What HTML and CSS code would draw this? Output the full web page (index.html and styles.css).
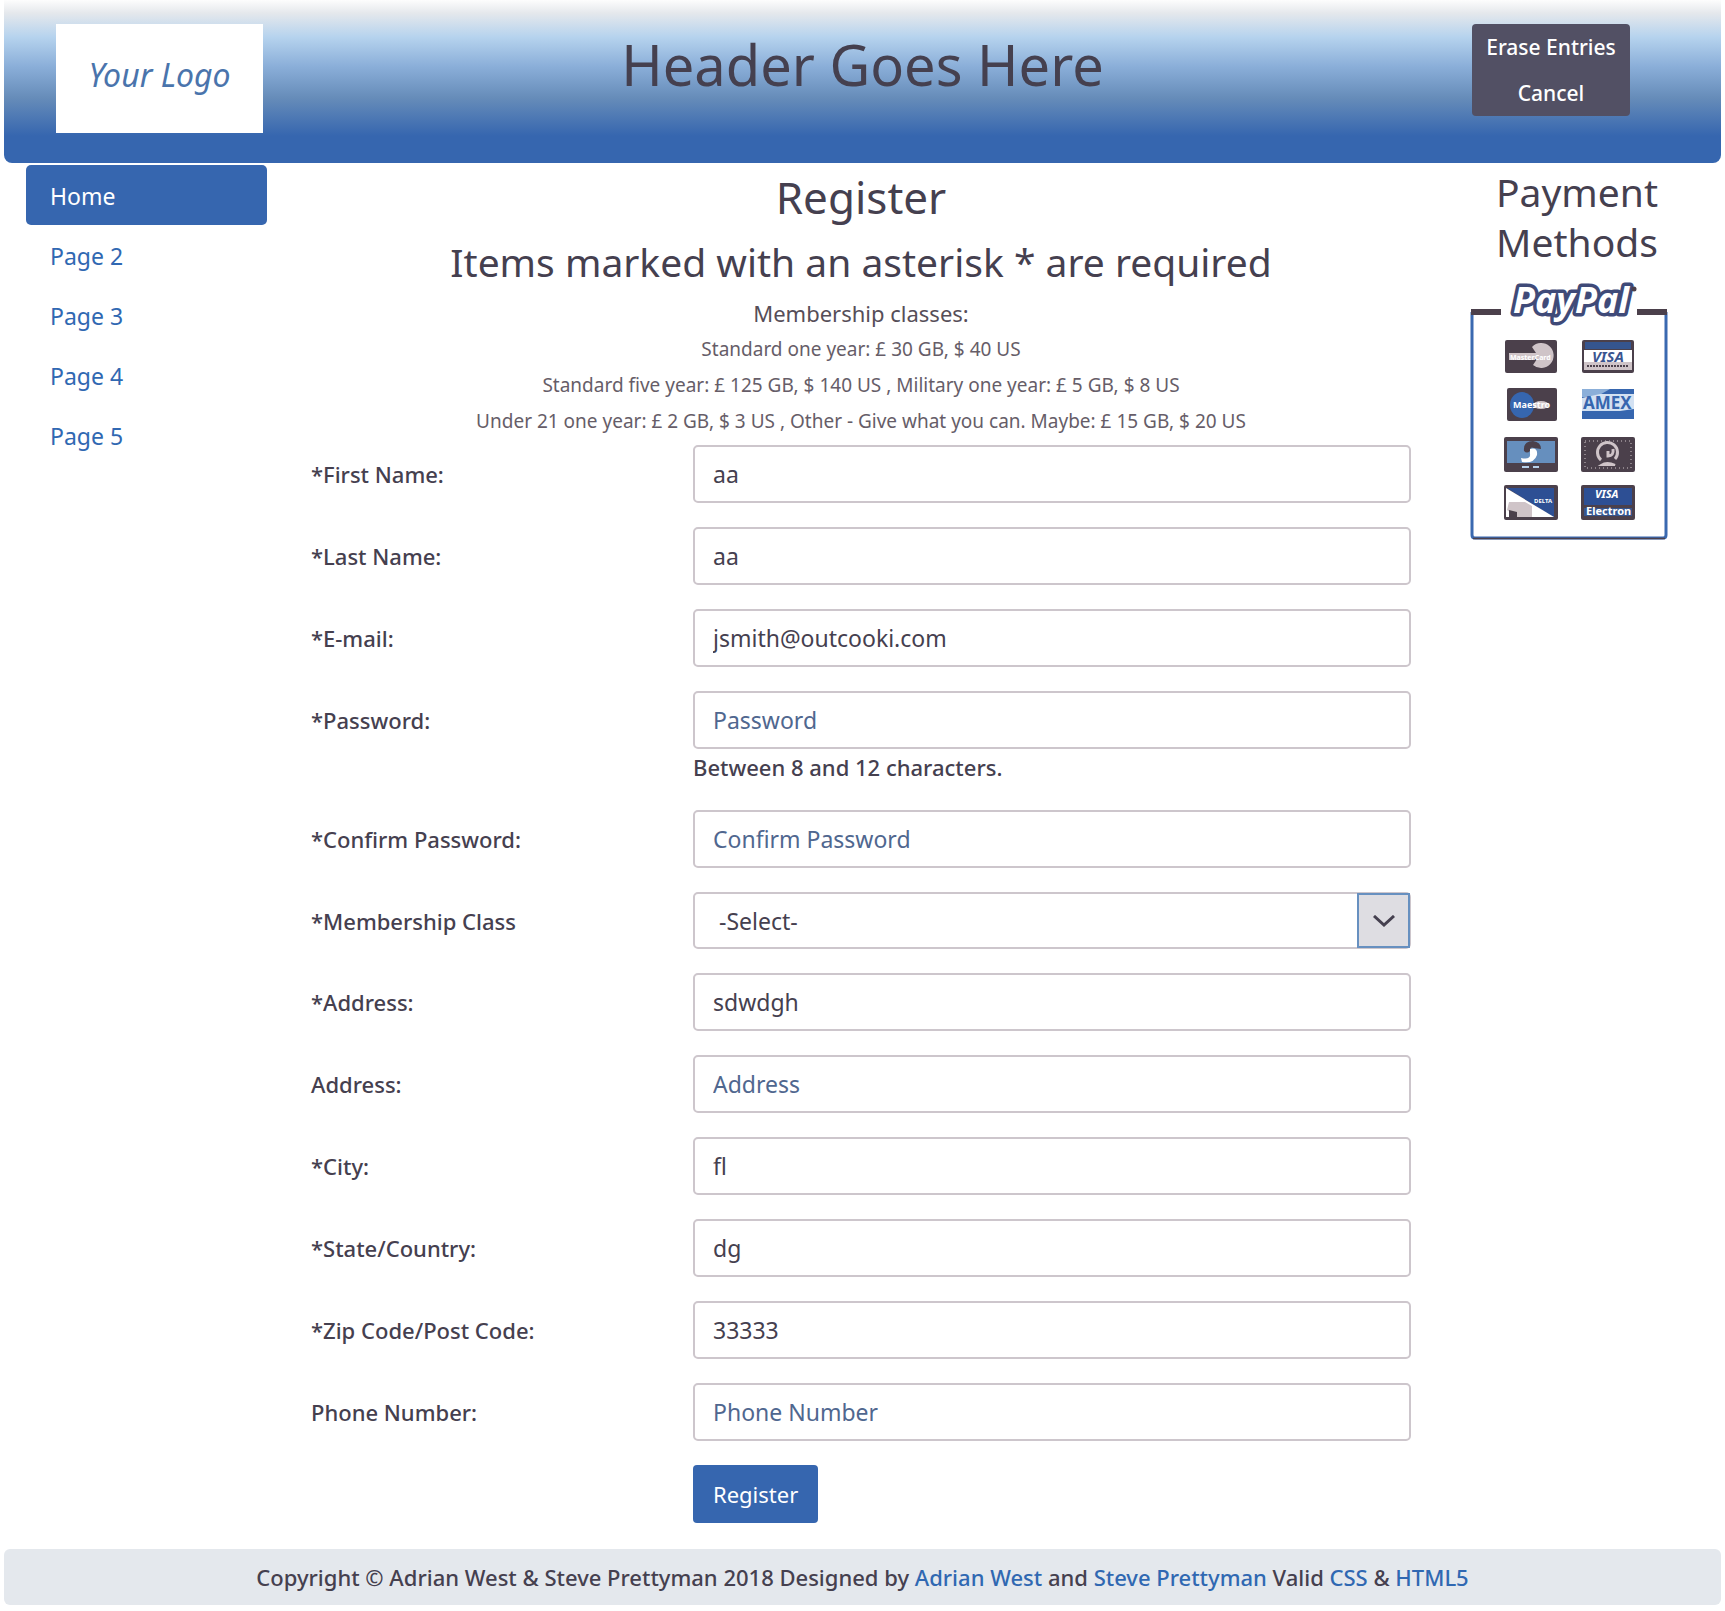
FILE: index.html
```html
<!DOCTYPE html>
<html lang="en">
<head>
<meta charset="utf-8">
<meta name="viewport" content="width=device-width, initial-scale=1">
<title>Register</title>
<link rel="stylesheet" href="styles.css">
</head>
<body>
<header class="banner">
  <div class="logo">Your Logo</div>
  <h1 class="banner-title">Header Goes Here</h1>
  <div class="banner-actions">
    <button type="reset" form="register-form">Erase Entries</button>
    <button type="button">Cancel</button>
  </div>
</header>
<div class="columns">
  <nav class="side-nav">
    <a class="active" href="#">Home</a>
    <a href="#">Page 2</a>
    <a href="#">Page 3</a>
    <a href="#">Page 4</a>
    <a href="#">Page 5</a>
  </nav>
  <main>
    <div class="intro">
      <h2>Register</h2>
      <h3>Items marked with an asterisk * are required</h3>
      <p class="classes-title">Membership classes:</p>
      <p class="classes">Standard one year: £ 30 GB, $ 40 US</p>
      <p class="classes">Standard five year: £ 125 GB, $ 140 US , Military one year: £ 5 GB, $ 8 US</p>
      <p class="classes">Under 21 one year: £ 2 GB, $ 3 US , Other - Give what you can. Maybe: £ 15 GB, $ 20 US</p>
    </div>
    <form id="register-form" class="form">
      <div class="row"><label for="first">*First Name:</label><input id="first" type="text" value="aa"></div>
      <div class="row"><label for="last">*Last Name:</label><input id="last" type="text" value="aa"></div>
      <div class="row"><label for="email">*E-mail:</label><input id="email" type="email" value="jsmith@outcooki.com"></div>
      <div class="row"><label for="password">*Password:</label><input id="password" type="password" placeholder="Password" aria-describedby="password-hint"><span id="password-hint" class="hint">Between 8 and 12 characters.</span></div>
      <div class="row"><label for="confirm">*Confirm Password:</label><input id="confirm" type="password" placeholder="Confirm Password"></div>
      <div class="row"><label for="level">*Membership Class</label>
        <div class="select-box">
          <select id="level"><option>-Select-</option><option>Standard one year</option><option>Standard five year</option><option>Military one year</option><option>Under 21 one year</option><option>Other</option></select>
          <span class="select-arrow"><svg width="22" height="12" viewBox="0 0 22 12" aria-hidden="true"><path d="M1 1L11 10L21 1"/></svg></span>
        </div>
      </div>
      <div class="row"><label for="address1">*Address:</label><input id="address1" type="text" value="sdwdgh"></div>
      <div class="row"><label for="address2">Address:</label><input id="address2" type="text" placeholder="Address"></div>
      <div class="row"><label for="city">*City:</label><input id="city" type="text" value="fl"></div>
      <div class="row"><label for="state">*State/Country:</label><input id="state" type="text" value="dg"></div>
      <div class="row"><label for="zip">*Zip Code/Post Code:</label><input id="zip" type="text" value="33333"></div>
      <div class="row"><label for="phone">Phone Number:</label><input id="phone" type="tel" placeholder="Phone Number"></div>
      <div class="row"><button class="submit" type="submit">Register</button></div>
    </form>
  </main>
  <aside class="payment">
    <h3>Payment Methods</h3>
    <svg class="paypal" width="200" height="257" viewBox="15 15 200 257" role="img" aria-label="PayPal and accepted cards">
      <path d="M17 42V265Q17 268 20 268H208Q211 268 211 265V42" fill="none" stroke="#3a69b0" stroke-width="3"/>
      <path d="M18 268.500H210" stroke="#4b404b" stroke-width="1.500"/>
      <path d="M16 42H46M182 42H212" stroke="#4b404b" stroke-width="6"/>
      <g class="wordmark"><text x="58" y="43">PayPal</text></g>
      <circle cx="179" cy="19" r="2.500" fill="#4b404b"/>
      <g fill="#4b404b">
        <rect x="50" y="70" width="52" height="33" rx="2"/>
        <rect x="127" y="70" width="52" height="33" rx="2"/>
        <rect x="52" y="118" width="50" height="33" rx="2"/>
        <rect x="49" y="167" width="54" height="35" rx="2"/>
        <rect x="126" y="167" width="54" height="35" rx="2"/>
        <rect x="49" y="215" width="54" height="35" rx="2"/>
        <rect x="126" y="215" width="54" height="35" rx="2"/>
      </g>
      <path d="M77 77A12.500 12.500 0 1 1 78 95L82 89H77V83H81Z" fill="#cfc4c8"/>
      <rect x="54" y="83" width="26" height="7" fill="#cfc4c8"/>
      <text class="card-text" x="55" y="90" font-size="7">MasterCard</text>
      <path d="M130 72H176V79H130Z" fill="#35558f"/>
      <rect x="129" y="80" width="48" height="12" fill="#fff"/>
      <text x="137" y="92" class="card-text visa" font-size="15">VISA</text>
      <rect x="129" y="92" width="48" height="8" fill="#cfc4c8"/>
      <path d="M132 96H174" stroke="#4b404b" stroke-width="2" stroke-dasharray="2 1"/>
      <ellipse cx="67" cy="135" rx="12" ry="13" fill="#3666af"/>
      <ellipse cx="86" cy="135" rx="8" ry="4" fill="#cfc4c8"/>
      <text x="58" y="138" class="card-text" font-size="9">Maestro</text>
      <rect x="127" y="119" width="52" height="30" fill="#3666af"/>
      <path d="M127 119H155L141 127H127Z" fill="#8bafd9"/>
      <path d="M127 128L145 124H179V139L165 141H127Z" fill="#d3e1f2"/>
      <text x="128" y="139" class="card-text amex" font-size="17">AMEX</text>
      <rect x="52" y="171" width="48" height="22" fill="#668fbe"/>
      <path d="M69 181Q68 171 78 171Q86 172 86 179L79 178Q75 176 75 181Q72 184 69 181" fill="#4b404b"/>
      <path d="M75 179Q83 177 82 185Q79 194 67 192L66 188Q76 190 75 184Z" fill="#fff"/>
      <path d="M67 197H74M78 197H84" stroke="#b8d2ec" stroke-width="2"/>
      <rect x="130" y="171" width="46" height="27" fill="none" stroke="#cfc4c8" stroke-dasharray="1 3"/>
      <path d="M146 190A10 10 0 1 1 160 189M153 181V186Q159 186 158 179" fill="none" stroke="#cfc4c8" stroke-width="3"/>
      <path d="M146 195Q152 191 160 195Z" fill="#cfc4c8" stroke="#cfc4c8" stroke-width="2"/>
      <path d="M52 218H99V247H98Z" fill="#2d4f94"/>
      <path d="M51 218L99 247H51Z" fill="#fff"/>
      <path d="M54 232H70L77 236V247H62L52 240Z" fill="#cfc4c8"/>
      <path d="M54 240L62 242V247H54Z" fill="#4b404b"/>
      <text x="79" y="233" class="card-text" font-size="6">DELTA</text>
      <rect x="129" y="218" width="48" height="17" fill="#2d4f94"/>
      <rect x="129" y="238" width="48" height="8" fill="#35558f"/>
      <text x="140" y="228" class="card-text slant" font-size="11">VISA</text>
      <text x="131" y="245" class="card-text" font-size="11">Electron</text>
    </svg>
  </aside>
</div>
<footer class="footer">Copyright © Adrian West &amp; Steve Prettyman 2018 Designed by <a href="#">Adrian West</a> and <a href="#">Steve Prettyman</a> Valid <a href="#">CSS</a> &amp; <a href="#">HTML5</a></footer>
</body>
</html>
```

FILE: styles.css
```css
* { box-sizing: border-box; }

body {
  margin: 0;
  padding: 0 4px 7px;
  background: #fff;
  color: #45404f;
  font-family: "Noto Sans", "Open Sans", sans-serif;
  font-size: 22px;
  line-height: 36px;
}

h1, h2, h3, p { margin: 0; font-weight: 400; }
a { color: #3068b2; text-decoration: none; }
button, input, select { font: inherit; color: inherit; }

.banner {
  display: grid;
  grid-template-columns: 207px 1fr 168px;
  padding: 24px 91px 30px 52px;
  border-radius: 0 0 8px 8px;
  background: linear-gradient(#fdfdfd 0, #e5e8ec 13px, #b6d3ee 37px, #8bafd9 66px, #668cb9 98px, #3666af 136px);
}
.logo {
  height: 109px;
  background: #fff;
  color: #4a74ac;
  font-size: 32px;
  font-style: italic;
  line-height: 102px;
  text-align: center;
}
.banner-title {
  font-size: 56px;
  line-height: 80px;
  text-align: center;
}
.banner-actions {
  display: flex;
  flex-direction: column;
  align-self: start;
  justify-self: end;
  width: 158px;
  border-radius: 4px;
  overflow: hidden;
}
.banner-actions button {
  height: 46px;
  padding: 0;
  border: 0;
  background: #525064;
  color: #fff;
  font-size: 21px;
  font-weight: 500;
  line-height: 44px;
}

.columns {
  display: grid;
  grid-template-columns: 241px 1fr 244px;
  gap: 44px;
  padding: 2px 22px 0;
}

.side-nav a {
  display: block;
  padding: 13px 24px 11px;
  border-radius: 5px;
  font-size: 23px;
}
.side-nav .active { background: #3666af; color: #fff; }

.intro { text-align: center; }
.intro h2 { font-size: 44px; line-height: 64px; }
.intro h3 { font-size: 39px; line-height: 66px; }
.classes-title { color: #564e58; }
.classes { font-size: 19px; color: #665d68; }

.form {
  display: flex;
  flex-direction: column;
  gap: 24px;
  padding: 6px 0 26px;
}
.row {
  display: grid;
  grid-template-columns: 382px 1fr;
  align-items: center;
}
.row label, .hint { font-weight: 500; }
.row input, .row select {
  width: 100%;
  height: 58px;
  padding: 0 18px;
  border: 2px solid #cdc6cc;
  border-radius: 5px;
  background: #fff;
  font-size: 23px;
}
.row input::placeholder { color: #50678f; opacity: 1; }
.hint { grid-column: 2; line-height: 37px; }
.select-box { position: relative; }
.row select {
  display: block;
  height: 57px;
  padding: 0 24px;
  appearance: none;
}
.select-arrow {
  position: absolute;
  top: 1px;
  right: 1px;
  bottom: 1px;
  display: grid;
  place-items: center;
  width: 53px;
  border: 2px solid #6790c0;
  background: #dedde2;
  pointer-events: none;
}
.select-arrow path { fill: none; stroke: #45404f; stroke-width: 3; }
.submit {
  grid-column: 2;
  justify-self: start;
  height: 58px;
  padding: 0 20px;
  border: 0;
  border-radius: 4px;
  background: #3666af;
  color: #fff;
}

.payment { text-align: center; }
.payment h3 { padding: 2px 30px 0; font-size: 39px; line-height: 50px; }
.paypal { display: block; margin: 18px 0 0 15px; overflow: visible; }
.wordmark text {
  font-size: 36px;
  font-style: italic;
  font-weight: 700;
  fill: #fff;
  stroke: #3f4a78;
  stroke-width: 7px;
  stroke-linejoin: round;
  paint-order: stroke;
}
.card-text { fill: #fff; font-weight: 700; }
.visa { fill: #3a5590; font-style: italic; }
.amex { fill: #3666af; }
.slant { font-style: italic; }

.footer {
  padding: 10px;
  border-radius: 6px;
  background: #e4e8ed;
  font-weight: 500;
  text-align: center;
}
```
